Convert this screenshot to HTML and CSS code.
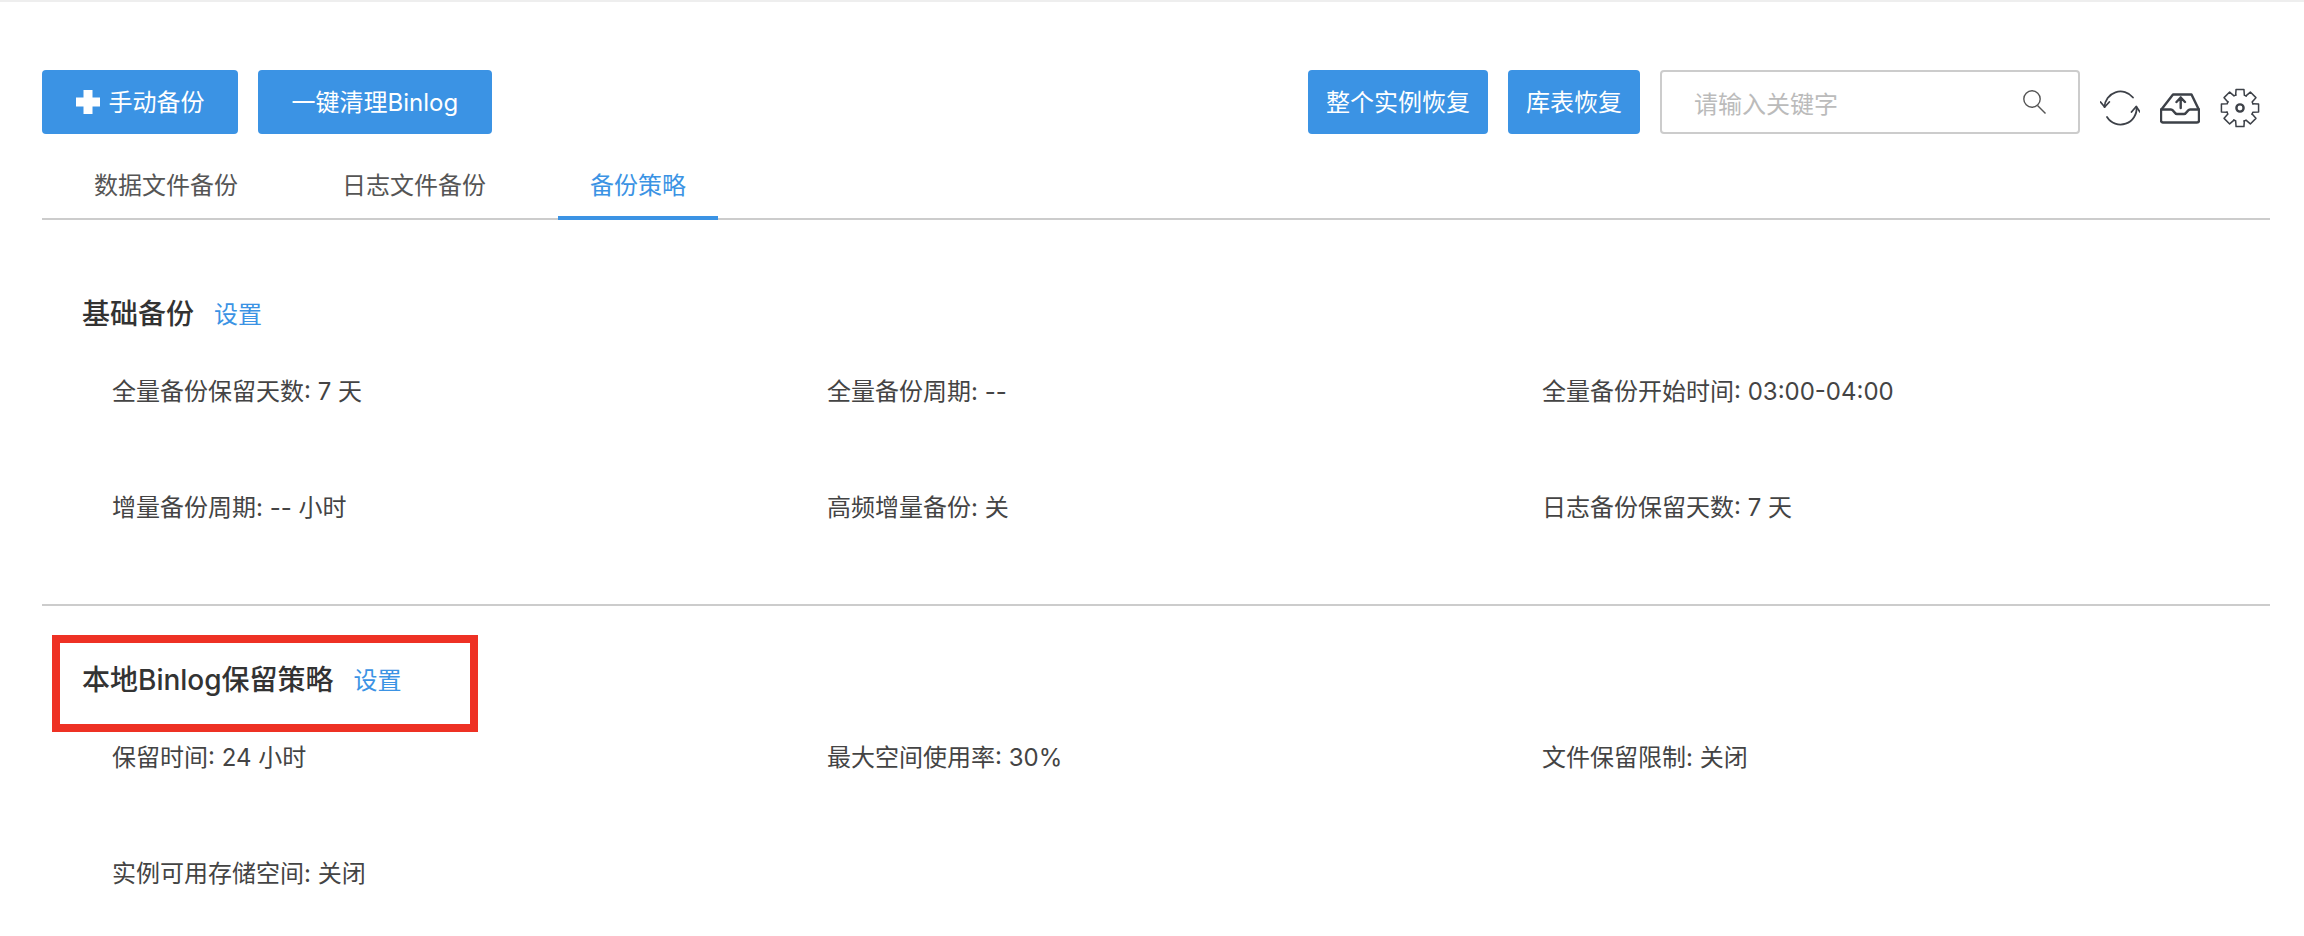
FILE: index.html
```html
<!DOCTYPE html>
<html lang="zh-CN">
<head>
<meta charset="utf-8">
<title>备份策略</title>
<link rel="stylesheet" href="styles.css">
</head>
<body>
<main class="page">
  <div class="toolbar">
    <div class="toolbar-group">
      <button class="btn btn-wide">
        <svg class="plus" viewBox="0 0 24 24"><path d="M7.5 0h9v7.5H24v9h-7.5V24h-9v-7.5H0v-9h7.5z"/></svg>手动备份
      </button>
      <button class="btn btn-wide">一键清理Binlog</button>
    </div>
    <div class="toolbar-group">
      <button class="btn">整个实例恢复</button>
      <button class="btn">库表恢复</button>
      <div class="search">
        <span class="placeholder">请输入关键字</span>
        <svg class="search-icon" viewBox="0 0 24 24"><circle cx="9" cy="9" r="8.200"/><path d="M14.500 15.500l8 8"/></svg>
      </div>
      <svg class="icon" viewBox="0 0 40 40">
        <path d="M4.500 19a16 16 0 0 1 28.500-9.500M7 29a16 16 0 0 0 29.500-10"/>
        <path d="M.5 14l4.200 5 4.600-5M31.500 24l4.700-5.500 3.800 5.500"/>
      </svg>
      <svg class="icon" viewBox="0 0 40 40">
        <path class="thick" d="M13 6.500h18.500L39 22v10.500a2 2 0 0 1-2 2H3a2 2 0 0 1-2-2V22z"/>
        <path class="thick" d="M1 21.500h10c3 0 3 4.500 6 4.500h7c3 0 3-4.500 6-4.500h9M20.700 20V9.500M16.500 14l4.200-4.500 4.300 4.500"/>
      </svg>
      <svg class="icon icon-gear" viewBox="0 0 40 40">
        <defs><path id="tooth" d="M15.670 7.190L16.050 1.420H23.950L24.330 7.190A13.500 13.500 0 0 1 26.350 8"/></defs>
        <use href="#tooth"/>
        <use href="#tooth" transform="rotate(45 20 20)"/>
        <use href="#tooth" transform="rotate(90 20 20)"/>
        <use href="#tooth" transform="rotate(135 20 20)"/>
        <use href="#tooth" transform="rotate(180 20 20)"/>
        <use href="#tooth" transform="rotate(225 20 20)"/>
        <use href="#tooth" transform="rotate(270 20 20)"/>
        <use href="#tooth" transform="rotate(315 20 20)"/>
        <circle class="thick" cx="20" cy="20" r="3.600"/>
      </svg>
    </div>
  </div>

  <nav class="tabs">
    <a class="tab">数据文件备份</a>
    <a class="tab">日志文件备份</a>
    <a class="tab tab-active">备份策略</a>
  </nav>

  <section class="section section-first">
    <h2 class="section-title">基础备份<a class="link">设置</a></h2>
    <div class="info-grid">
      <div class="info-item">全量备份保留天数: 7 天</div>
      <div class="info-item">全量备份周期: --</div>
      <div class="info-item">全量备份开始时间: 03:00-04:00</div>
      <div class="info-item">增量备份周期: -- 小时</div>
      <div class="info-item">高频增量备份: 关</div>
      <div class="info-item">日志备份保留天数: 7 天</div>
    </div>
  </section>

  <section class="section section-second">
    <div class="highlight"></div>
    <h2 class="section-title">本地Binlog保留策略<a class="link">设置</a></h2>
    <div class="info-grid">
      <div class="info-item">保留时间: 24 小时</div>
      <div class="info-item">最大空间使用率: 30%</div>
      <div class="info-item">文件保留限制: 关闭</div>
      <div class="info-item">实例可用存储空间: 关闭</div>
    </div>
  </section>
</main>
</body>
</html>
```

FILE: styles.css
```css
* {
  box-sizing: border-box;
}

html,
body {
  margin: 0;
  background: #fff;
}

body {
  border-top: 2px solid #eeeeee;
  font-family: Inter, "Noto Sans CJK SC", sans-serif;
  font-size: 24px;
  color: #444;
  overflow: hidden;
}

.page {
  padding: 68px 34px 0 42px;
}

.toolbar {
  display: flex;
  justify-content: space-between;
  align-items: center;
  height: 64px;
  padding-right: 10px;
}

.toolbar-group {
  display: flex;
  align-items: center;
  gap: 20px;
}

.btn {
  display: flex;
  align-items: center;
  height: 64px;
  padding: 0 18px 3px;
  border: 0;
  border-radius: 4px;
  background: #3b93e4;
  color: #fff;
  font: inherit;
}

.btn-wide {
  padding: 0 33.5px 3px;
}

.plus {
  width: 24px;
  height: 24px;
  margin: 3px 9px 0 0;
  fill: #fff;
}

.search {
  display: flex;
  align-items: center;
  justify-content: space-between;
  width: 420px;
  height: 64px;
  padding: 0 31px 0 32px;
  border: 2px solid #ccc;
  border-radius: 4px;
}

.placeholder {
  color: #bbb;
}

.search-icon {
  width: 24px;
  height: 24px;
  fill: none;
  stroke: #555;
  stroke-width: 1.4;
}

.icon {
  width: 40px;
  height: 40px;
  margin-top: 12px;
  fill: none;
  stroke: #3d4148;
  stroke-width: 1.8;
  stroke-linecap: round;
  stroke-linejoin: round;
}

.icon-gear {
  stroke-width: 1.5;
}

.thick {
  stroke-width: 2.4;
}

.tabs {
  display: flex;
  gap: 40px;
  height: 86px;
  padding-left: 20px;
  border-bottom: 2px solid #ccc;
}

.tab {
  height: 86px;
  padding: 32px 32px 0;
  line-height: 40px;
  color: #555;
}

.tab-active {
  border-bottom: 4px solid #3b93e4;
  color: #3b93e4;
}

.section {
  position: relative;
}

.section-first {
  padding-top: 73px;
  padding-bottom: 41px;
  border-bottom: 2px solid #ccc;
}

.section-second {
  padding-top: 53px;
}

.section-title {
  display: flex;
  align-items: center;
  height: 38px;
  margin: 0;
  padding-left: 40px;
  font-size: 28px;
  font-weight: 500;
  color: #333;
}

.link {
  margin-left: 20px;
  font-size: 24px;
  font-weight: 400;
  color: #3b93e4;
}

.info-grid {
  display: grid;
  grid-template-columns: repeat(3, 715px);
  grid-auto-rows: 116px;
  align-items: center;
  padding-left: 70px;
}

.highlight {
  position: absolute;
  top: 29px;
  left: 10px;
  width: 426px;
  height: 97px;
  border: 8px solid #ee3124;
}
```
